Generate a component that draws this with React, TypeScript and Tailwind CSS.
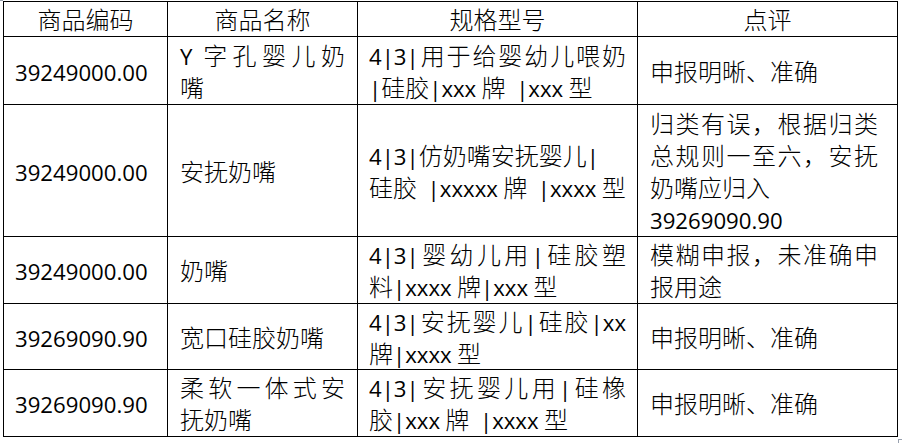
import React from "react";

type Line = { t: string; j?: boolean };

function Txt({ s }: { s: string }) {
  const parts = s.split(/([!-~]+)/).filter((p) => p.length > 0);
  return (
    <>
      {parts.map((p, i) =>
        /^[!-~]+$/.test(p) ? (
          <span key={i} className="font-['Open_Sans',sans-serif] text-[22.2px] leading-none font-normal">
            {p}
          </span>
        ) : (
          <span key={i}>{p}</span>
        )
      )}
    </>
  );
}

function Lines({ lines, w }: { lines: Line[]; w: string }) {
  return (
    <div className={w}>
      {lines.map((l, i) => (
        <div
          key={i}
          className={
            l.j
              ? "h-[32px] whitespace-nowrap text-justify [text-align-last:justify]"
              : "h-[32px] whitespace-pre"
          }
        >
          <Txt s={l.t} />
        </div>
      ))}
    </div>
  );
}

type Row = {
  code: string;
  name: Line[];
  spec: Line[];
  comment: Line[];
  h: string;
};

const rows: Row[] = [
  {
    code: "39249000.00",
    name: [{ t: "Y 字孔婴儿奶", j: true }, { t: "嘴" }],
    spec: [{ t: "4|3|用于给婴幼儿喂奶", j: true }, { t: "|硅胶|xxx 牌  |xxx 型" }],
    comment: [{ t: "申报明晰、准确" }],
    h: "h-[68px]",
  },
  {
    code: "39249000.00",
    name: [{ t: "安抚奶嘴" }],
    spec: [{ t: "4|3|仿奶嘴安抚婴儿|" }, { t: "硅胶  |xxxxx 牌  |xxxx 型" }],
    comment: [
      { t: "归类有误，根据归类", j: true },
      { t: "总规则一至六，安抚", j: true },
      { t: "奶嘴应归入" },
      { t: "39269090.90" },
    ],
    h: "h-[132px]",
  },
  {
    code: "39249000.00",
    name: [{ t: "奶嘴" }],
    spec: [{ t: "4|3|婴幼儿用|硅胶塑", j: true }, { t: "料|xxxx 牌|xxx 型" }],
    comment: [{ t: "模糊申报，未准确申", j: true }, { t: "报用途" }],
    h: "h-[67px]",
  },
  {
    code: "39269090.90",
    name: [{ t: "宽口硅胶奶嘴" }],
    spec: [{ t: "4|3|安抚婴儿|硅胶|xx", j: true }, { t: "牌|xxxx 型" }],
    comment: [{ t: "申报明晰、准确" }],
    h: "h-[66px]",
  },
  {
    code: "39269090.90",
    name: [{ t: "柔软一体式安", j: true }, { t: "抚奶嘴" }],
    spec: [{ t: "4|3|安抚婴儿用|硅橡", j: true }, { t: "胶|xxx 牌  |xxxx 型" }],
    comment: [{ t: "申报明晰、准确" }],
    h: "h-[67px]",
  },
];

export default function App() {
  return (
    <div className="relative w-[902px] h-[443px] overflow-hidden bg-white text-black font-['Noto_Sans_CJK_SC',sans-serif] font-light text-[24px] leading-[32px]">
      <table className="ml-[3px] mt-[1px] table-fixed border-collapse w-[894px]">
        <colgroup>
          <col className="w-[164px]" />
          <col className="w-[190px]" />
          <col className="w-[280px]" />
          <col className="w-[260px]" />
        </colgroup>
        <thead>
          <tr className="h-[35px]">
            {["商品编码", "商品名称", "规格型号", "点评"].map((h) => (
              <th
                key={h}
                className="border border-black p-0 text-center align-middle font-light"
              >
                {h}
              </th>
            ))}
          </tr>
        </thead>
        <tbody>
          {rows.map((r, i) => (
            <tr key={i} className={r.h}>
              <td className="border border-black p-0 pl-[11px] align-middle">
                <div className="h-[32px]">
                  <span className="font-['Open_Sans',sans-serif] text-[22.2px] leading-none font-normal">
                    {r.code}
                  </span>
                </div>
              </td>
              <td className="border border-black p-0 pl-[12px] align-middle">
                <Lines lines={r.name} w="w-[165px]" />
              </td>
              <td className="border border-black p-0 pl-[11px] align-middle">
                <Lines lines={r.spec} w="w-[257px]" />
              </td>
              <td className="border border-black p-0 pl-[12px] align-middle">
                <Lines lines={r.comment} w="w-[228px]" />
              </td>
            </tr>
          ))}
        </tbody>
      </table>
      <div className="absolute left-0 top-0 w-[3px] h-[2px] border-t border-gray-400" />
      <div className="absolute left-[898px] top-[439px] w-[4px] h-[4px] border-l border-t border-gray-400" />
    </div>
  );
}
